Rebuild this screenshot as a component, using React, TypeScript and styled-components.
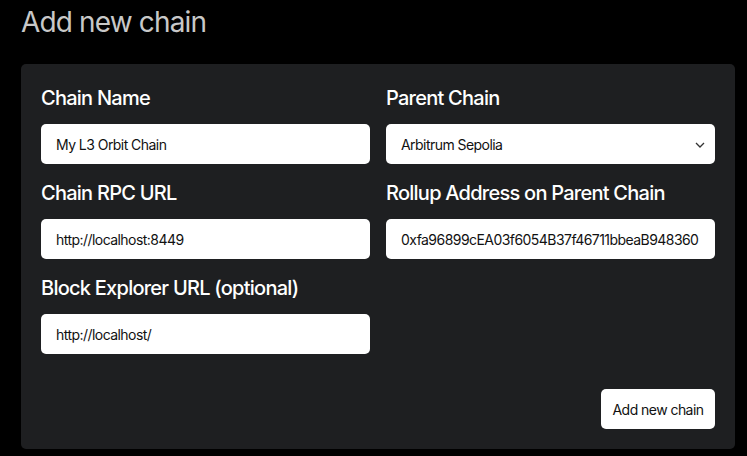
import React from "react";
import styled, { createGlobalStyle } from "styled-components";

const GlobalStyle = createGlobalStyle`
  html, body {
    margin: 0;
    padding: 0;
    background: #000;
  }
  body {
    font-family: Inter, "Noto Sans", sans-serif;
  }
`;

const Page = styled.div`
  padding: 5px 12px 8px 21px;
  min-height: 456px;
  box-sizing: border-box;
`;

const Title = styled.h1`
  margin: 0 0 25px;
  font-size: 28px;
  line-height: 34px;
  font-weight: 400;
  color: #c8c8c8;
  letter-spacing: -0.85px;
`;

const Panel = styled.div`
  background: #1e1f21;
  border-radius: 5px;
  padding: 20px;
  display: flex;
  flex-direction: column;
`;

const Grid = styled.div`
  display: grid;
  grid-template-columns: 1fr 1fr;
  column-gap: 16px;
  row-gap: 15px;
`;

const Field = styled.div`
  display: flex;
  flex-direction: column;
`;

const Label = styled.label`
  font-size: 20px;
  line-height: 28px;
  font-weight: 500;
  color: #fff;
  margin-bottom: 12px;
  letter-spacing: -0.75px;
`;

const Input = styled.input`
  height: 40px;
  box-sizing: border-box;
  border: none;
  border-radius: 5px;
  background: #fff;
  padding: 0 15px;
  font-family: Inter, "Noto Sans", sans-serif;
  font-size: 14px;
  color: #111;
  outline: none;
  letter-spacing: -0.55px;
`;

const SelectBox = styled.div`
  position: relative;
  display: flex;
`;

const Select = styled.select`
  flex: 1;
  height: 40px;
  box-sizing: border-box;
  border: none;
  border-radius: 5px;
  background: #fff;
  padding: 0 15px;
  font-family: Inter, "Noto Sans", sans-serif;
  font-size: 14px;
  color: #111;
  appearance: none;
  outline: none;
  letter-spacing: -0.55px;
`;

const Chevron = styled.svg`
  position: absolute;
  right: 10px;
  top: 18px;
  pointer-events: none;
`;

const Footer = styled.div`
  display: flex;
  justify-content: flex-end;
  margin-top: 35px;
`;

const Button = styled.button`
  height: 40px;
  width: 114px;
  padding: 0;
  border: none;
  border-radius: 5px;
  background: #fff;
  color: #111;
  font-family: Inter, "Noto Sans", sans-serif;
  font-size: 14px;
  letter-spacing: -0.55px;
  cursor: pointer;
`;

const App = () => {
  return (
    <>
      <GlobalStyle />
      <Page>
        <Title>Add new chain</Title>
        <Panel>
          <Grid>
            <Field>
              <Label>Chain Name</Label>
              <Input defaultValue="My L3 Orbit Chain" />
            </Field>
            <Field>
              <Label>Parent Chain</Label>
              <SelectBox>
                <Select defaultValue="arbitrum-sepolia">
                  <option value="arbitrum-sepolia">Arbitrum Sepolia</option>
                  <option value="arbitrum-one">Arbitrum One</option>
                </Select>
                <Chevron width="10" height="6" viewBox="0 0 10 6">
                  <path d="M1 1l4 4 4-4" fill="none" stroke="#333" strokeWidth="1.3" />
                </Chevron>
              </SelectBox>
            </Field>
            <Field>
              <Label>Chain RPC URL</Label>
              <Input defaultValue="http://localhost:8449" />
            </Field>
            <Field>
              <Label>Rollup Address on Parent Chain</Label>
              <Input defaultValue="0xfa96899cEA03f6054B37f46711bbeaB948360" />
            </Field>
            <Field>
              <Label>Block Explorer URL (optional)</Label>
              <Input defaultValue="http://localhost/" />
            </Field>
          </Grid>
          <Footer>
            <Button>Add new chain</Button>
          </Footer>
        </Panel>
      </Page>
    </>
  );
};

export default App;
